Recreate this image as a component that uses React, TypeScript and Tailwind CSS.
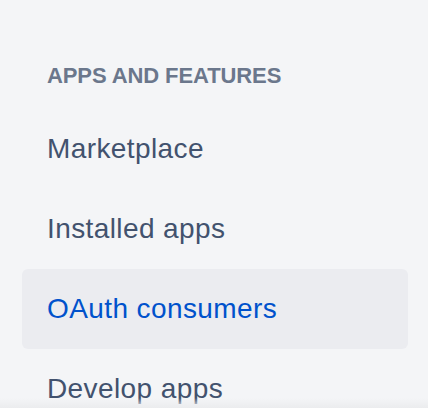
import React from "react";

const items = [
  { label: "Marketplace", active: false },
  { label: "Installed apps", active: false },
  { label: "OAuth consumers", active: true },
  { label: "Develop apps", active: false },
];

export default function App() {
  return (
    <div
      className="relative h-[408px] w-[428px] overflow-hidden bg-[#f4f5f7]"
      style={{ fontFamily: '"Liberation Sans", Arial, sans-serif' }}
    >
      <nav className="pl-[22px] pr-[20px] pt-[64px]">
        <h2 className="pl-[25px] text-[22px] leading-[24px] font-bold uppercase tracking-[-0.1px] text-[#6b778c]">
          Apps and features
        </h2>
        <ul className="mt-[21px]">
          {items.map((it) => (
            <li key={it.label}>
              <a
                href="#"
                className={
                  "flex h-[80px] items-center rounded-[6px] pl-[25px] text-[28px] tracking-[0.4px] " +
                  (it.active ? "bg-[#ebecf0] text-[#0052cc]" : "text-[#42526e]")
                }
              >
                {it.label}
              </a>
            </li>
          ))}
        </ul>
      </nav>
      <div className="pointer-events-none absolute inset-x-0 bottom-0 h-[10px] bg-gradient-to-b from-transparent to-[#ebecee]" />
    </div>
  );
}
